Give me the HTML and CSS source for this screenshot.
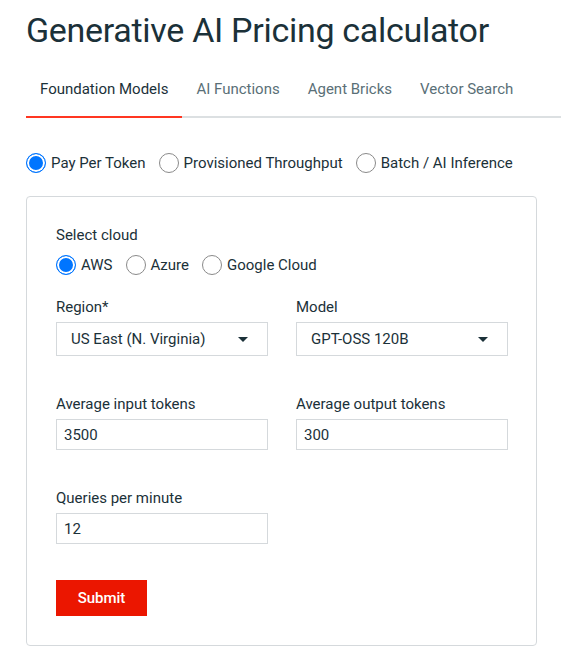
FILE: index.html
```html
<!DOCTYPE html>
<html lang="en">
<head>
    <meta charset="UTF-8">
    <meta name="viewport" content="width=device-width, initial-scale=1.0">
    <title>Generative AI Pricing calculator</title>
    <link rel="stylesheet" href="styles.css">
</head>
<body>
    <h1>Generative AI Pricing calculator</h1>

    <div class="tabs">
        <div class="tab active">Foundation Models</div>
        <div class="tab">AI Functions</div>
        <div class="tab">Agent Bricks</div>
        <div class="tab">Vector Search</div>
    </div>

    <div class="modes">
        <label class="radio"><input type="radio" name="mode" checked> Pay Per Token</label>
        <label class="radio"><input type="radio" name="mode"> Provisioned Throughput</label>
        <label class="radio"><input type="radio" name="mode"> Batch / AI Inference</label>
    </div>

    <form class="card" onsubmit="return false">
        <div class="field">
            <div class="label">Select cloud</div>
            <div class="clouds">
                <label class="radio"><input type="radio" name="cloud" checked> AWS</label>
                <label class="radio"><input type="radio" name="cloud"> Azure</label>
                <label class="radio"><input type="radio" name="cloud"> Google Cloud</label>
            </div>
        </div>

        <div class="grid">
            <div class="field">
                <div class="label">Region*</div>
                <div class="select">
                    <span>US East (N. Virginia)</span>
                    <span class="caret"></span>
                </div>
            </div>
            <div class="field">
                <div class="label">Model</div>
                <div class="select">
                    <span>GPT-OSS 120B</span>
                    <span class="caret"></span>
                </div>
            </div>
            <div class="field">
                <div class="label">Average input tokens</div>
                <input class="text" type="text" value="3500">
            </div>
            <div class="field">
                <div class="label">Average output tokens</div>
                <input class="text" type="text" value="300">
            </div>
            <div class="field">
                <div class="label">Queries per minute</div>
                <input class="text" type="text" value="12">
            </div>
        </div>

        <button class="submit" type="submit">Submit</button>
    </form>
</body>
</html>
```

FILE: styles.css
```css
body {
    margin: 0;
    padding: 0 0 0 26px;
    font-family: Roboto, "Noto Sans", sans-serif;
    color: #1b3139;
    background-color: #fff;
}
h1 {
    margin: 0;
    padding-top: 8px;
    font-size: 34px;
    font-weight: 400;
    letter-spacing: -0.3px;
    line-height: 44px;
}
.tabs {
    display: flex;
    margin-top: 18px;
    border-bottom: 2px solid #dce0e2;
}
.tab {
    padding: 10px 14px 18px 14px;
    margin-bottom: -2px;
    font-size: 15px;
    color: #5a6f77;
}
.tab.active {
    color: #1b3139;
    border-bottom: 2px solid #ff3621;
}
.modes {
    display: flex;
    gap: 13px;
    margin-top: 35px;
}
.radio {
    display: flex;
    align-items: center;
    gap: 5px;
    font-size: 15px;
}
.radio input {
    appearance: none;
    margin: 0;
    width: 20px;
    height: 20px;
    border: 1px solid #8a8a8a;
    border-radius: 50%;
    background: #fff;
}
.radio input:checked {
    border-color: #0075ff;
    box-shadow: inset 0 0 0 2px #fff;
    background: #0075ff;
}
.card {
    width: 451px;
    margin-top: 23px;
    padding: 29px 29px 29px 29px;
    border: 1px solid #d5d9dc;
    border-radius: 4px;
}
.label {
    font-size: 15px;
    margin-bottom: 6px;
}
.clouds {
    display: flex;
    gap: 13px;
    margin-top: 11px;
}
.grid {
    display: grid;
    grid-template-columns: 212px 212px;
    column-gap: 28px;
    row-gap: 39px;
    margin-top: 23px;
}
.select {
    display: flex;
    justify-content: space-between;
    align-items: center;
    height: 34px;
    box-sizing: border-box;
    padding: 0 19px 0 14px;
    border: 1px solid #d5d9dc;
    font-size: 15px;
}
.caret {
    width: 0;
    height: 0;
    border-left: 5px solid transparent;
    border-right: 5px solid transparent;
    border-top: 5px solid #1b3139;
}
.text {
    display: block;
    width: 212px;
    height: 31px;
    box-sizing: border-box;
    padding: 0 7px;
    border: 1px solid #d5d9dc;
    font-family: inherit;
    font-size: 15px;
    color: #1b3139;
    outline: none;
}
.submit {
    margin-top: 36px;
    width: 91px;
    height: 36px;
    border: none;
    background-color: #eb1600;
    color: #fff;
    font-family: inherit;
    font-size: 15px;
    font-weight: 500;
    cursor: pointer;
}
```
